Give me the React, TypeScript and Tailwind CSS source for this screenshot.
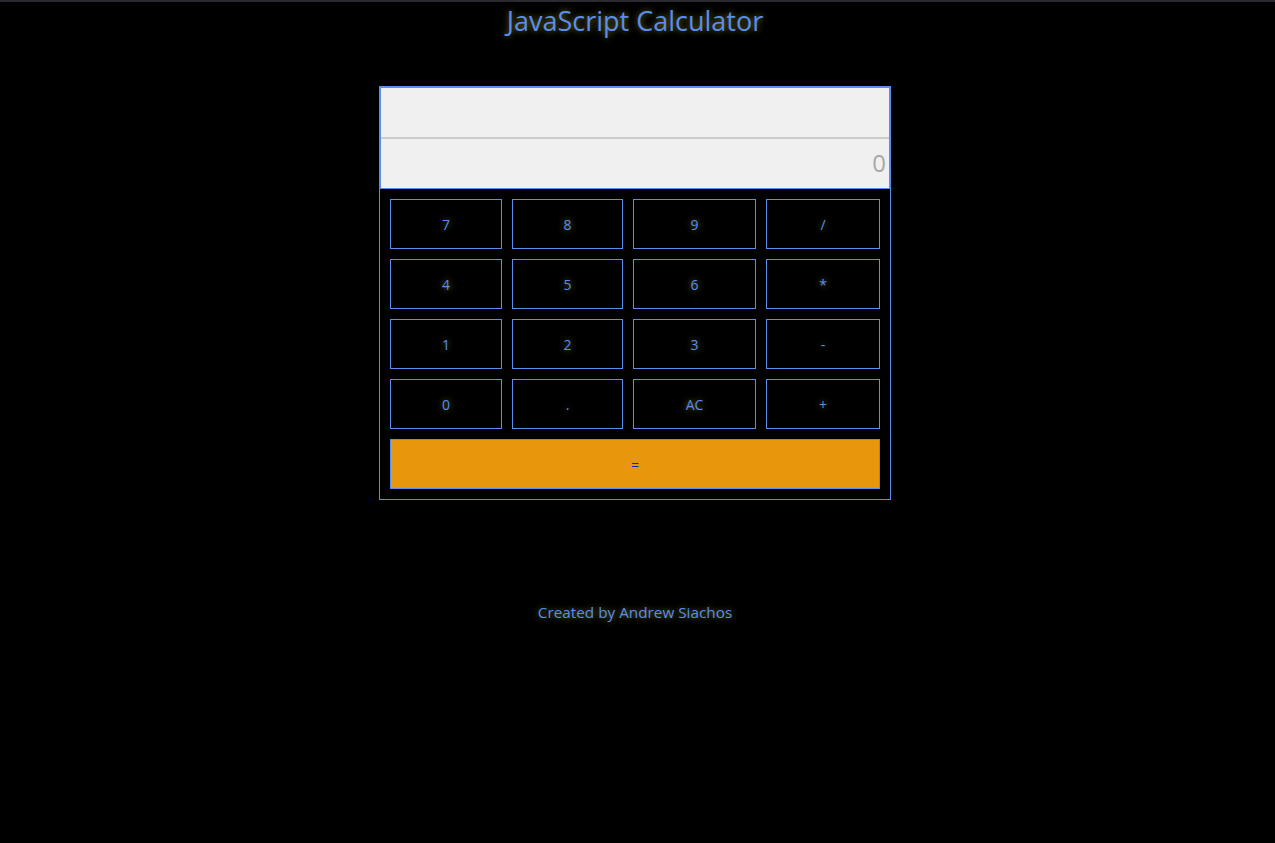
import React from "react";

const keys = ["7", "8", "9", "/", "4", "5", "6", "*", "1", "2", "3", "-", "0", ".", "AC", "+"];

const glow = { textShadow: "0 0 6px rgba(200, 200, 40, 0.6)" };

export default function App() {
  return (
    <div className="min-h-[843px] bg-black font-['Open_Sans',sans-serif]">
      <div className="w-full h-[2px] bg-[#2a2a30]" />
      <div className="flex flex-col items-center pr-[5px]">
        <h1 className="mt-[1px] text-[27px] leading-[36px] text-[#5b8def]" style={glow}>
          JavaScript Calculator
        </h1>

        {/* calculator body */}
        <div className="mt-[47px] w-[512px] border border-[#5b8def]">
          <div className="border border-[#5b8def] bg-[#f0f0f0]">
            <div className="h-[51px] border-b-2 border-[#cccccc]" />
            <div className="h-[49px] flex items-center justify-end pr-[3px] pb-[2px] text-[24px] leading-none text-[#a8a8a8]">
              0
            </div>
          </div>
          <div className="p-[10px] grid grid-cols-[112px_111px_123px_114px] gap-[10px]">
            {keys.map((k) => (
              <button
                key={k}
                className="h-[50px] border border-[#5b8def] bg-black text-[14px] text-[#5b8def]"
                style={glow}
              >
                {k}
              </button>
            ))}
            <button className="col-span-4 h-[50px] border border-[#5b8def] bg-[#e8960b] text-[14px] text-[#1c1cc8]">
              =
            </button>
          </div>
        </div>

        <p className="mt-[101px] text-[15.3px] text-[#5b8def]" style={glow}>
          Created by Andrew Siachos
        </p>
      </div>
    </div>
  );
}
